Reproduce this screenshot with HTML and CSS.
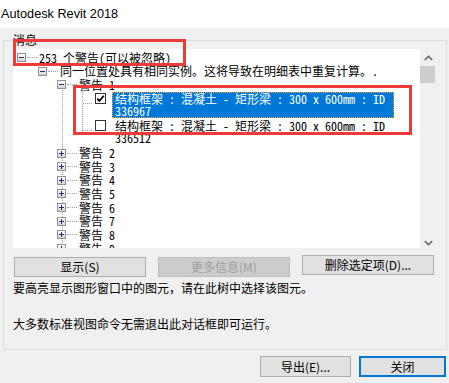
FILE: index.html
```html
<!DOCTYPE html>
<html lang="zh-CN">
<head>
<meta charset="utf-8">
<title>Autodesk Revit 2018</title>
<link rel="stylesheet" href="styles.css">
</head>
<body>
<div class="window">
  <header class="titlebar">Autodesk Revit 2018</header>
  <main class="content">
    <section class="group">
      <div class="legend">消息</div>
      <div class="tree">
        <div class="tree-view">
          <div class="row lvl0"><span class="tog minus"></span><span class="dots"></span><span class="label">253 个警告(可以被忽略)</span></div>
          <div class="row lvl1"><span class="tog minus"></span><span class="dots"></span><span class="label">同一位置处具有相同实例。这将导致在明细表中重复计算。.</span></div>
          <div class="warnings">
            <div class="row lvl2"><span class="tog minus"></span><span class="dots"></span><span class="label">警告 1</span></div>
            <div class="items">
              <div class="item">
                <span class="dots"></span>
                <span class="check"><svg width="9" height="9" viewBox="0 0 9 9"><path d="M1.2 4.6 L3.4 6.9 L7.8 1.8" fill="none" stroke="#000" stroke-width="1.7"/></svg></span>
                <span class="ilabel selected">结构框架 : 混凝土 - 矩形梁 : 300 x 600mm : ID<br>336967</span>
              </div>
              <div class="item">
                <span class="dots"></span>
                <span class="check"></span>
                <span class="ilabel">结构框架 : 混凝土 - 矩形梁 : 300 x 600mm : ID<br>336512</span>
              </div>
            </div>
            <div class="row lvl2"><span class="tog plus"></span><span class="dots"></span><span class="label">警告 2</span></div>
            <div class="row lvl2"><span class="tog plus"></span><span class="dots"></span><span class="label">警告 3</span></div>
            <div class="row lvl2"><span class="tog plus"></span><span class="dots"></span><span class="label">警告 4</span></div>
            <div class="row lvl2"><span class="tog plus"></span><span class="dots"></span><span class="label">警告 5</span></div>
            <div class="row lvl2"><span class="tog plus"></span><span class="dots"></span><span class="label">警告 6</span></div>
            <div class="row lvl2"><span class="tog plus"></span><span class="dots"></span><span class="label">警告 7</span></div>
            <div class="row lvl2"><span class="tog plus"></span><span class="dots"></span><span class="label">警告 8</span></div>
            <div class="row lvl2"><span class="tog plus"></span><span class="dots"></span><span class="label">警告 9</span></div>
          </div>
        </div>
        <div class="scrollbar">
          <span class="sb-arrow up"><svg width="9" height="6" viewBox="0 0 9 6"><path d="M0.8 5 L4.5 1.3 L8.2 5" fill="none" stroke="#606060" stroke-width="1.6"/></svg></span>
          <span class="thumb"></span>
          <span class="sb-space"></span>
          <span class="sb-arrow down"><svg width="9" height="6" viewBox="0 0 9 6"><path d="M0.8 1 L4.5 4.7 L8.2 1" fill="none" stroke="#606060" stroke-width="1.6"/></svg></span>
        </div>
      </div>
      <div class="actions">
        <button class="btn">显示(S)</button>
        <button class="btn" disabled>更多信息(M)</button>
        <button class="btn raised">删除选定项(D)...</button>
      </div>
      <p class="hint first">要高亮显示图形窗口中的图元，请在此树中选择该图元。</p>
      <p class="hint second">大多数标准视图命令无需退出此对话框即可运行。</p>
    </section>
    <footer class="footer">
      <button class="btn export">导出(E)...</button>
      <button class="btn close">关闭</button>
    </footer>
  </main>
  <div class="mark mark-a"></div>
  <div class="mark mark-b"></div>
</div>
</body>
</html>
```

FILE: styles.css
```css
* { box-sizing: border-box; }
html, body { margin: 0; padding: 0; }
body {
  background: #f0f0f0;
  width: 449px;
  height: 383px;
  overflow: hidden;
  font-family: "Noto Sans CJK SC", sans-serif;
  font-size: 12px;
  color: #000;
}
.window { position: relative; width: 449px; height: 383px; }
.titlebar {
  height: 28px;
  line-height: 28px;
  background: #fff;
  padding-left: 1px;
  font-family: "Liberation Sans", Arial, sans-serif;
  font-size: 12.7px;
  color: #000;
}
.content { padding-top: 12px; }
.group {
  margin: 0 2px 0 3px;
  height: 310px;
  border: 1px solid #dcdcdc;
  padding: 0 9px;
}
.legend {
  display: block;
  width: max-content;
  margin: -8px 0 0 -1px;
  padding: 0 1px;
  height: 13px;
  line-height: 13px;
  background: #f0f0f0;
}
.tree {
  display: flex;
  height: 199px;
  margin-top: 3px;
}
.tree-view {
  flex: 1;
  background: #fff;
  overflow: hidden;
  padding-top: 1.7px;
  font-family: "Noto Sans Mono CJK SC", "Noto Sans CJK SC", monospace;
  font-size: 12px;
  line-height: 13.65px;
}
.row {
  display: flex;
  align-items: center;
  height: 13.65px;
  white-space: nowrap;
}
.lvl0 { padding-left: 4px; }
.lvl1 { padding-left: 25px; }
.lvl2 { padding-left: 44px; }
.tog {
  position: relative;
  flex: none;
  width: 9px;
  height: 9px;
  border: 1px solid #919191;
  background: linear-gradient(#ffffff, #d4d4d4);
}
.tog::before {
  content: "";
  position: absolute;
  left: 1px;
  top: 3px;
  width: 5px;
  height: 1px;
  background: #1f2f7a;
}
.tog.plus::after {
  content: "";
  position: absolute;
  left: 3px;
  top: 1px;
  width: 1px;
  height: 5px;
  background: #1f2f7a;
}
.dots {
  flex: none;
  width: 10px;
  height: 0;
  margin: 0 2px 0 1px;
  border-bottom: 1px dotted #a0a0a0;
}
.label { line-height: 13.65px; }
.warnings {
  background-image: repeating-linear-gradient(to bottom, #a0a0a0 0 1px, transparent 1px 2px);
  background-repeat: no-repeat;
  background-size: 1px 100%;
  background-position: 49px 12px;
}
.items {
  background-image: repeating-linear-gradient(to bottom, #a0a0a0 0 1px, transparent 1px 2px);
  background-repeat: no-repeat;
  background-size: 1px 40px;
  background-position: 69px 0;
}
.item {
  display: flex;
  align-items: flex-start;
  height: 27.3px;
  padding-left: 70px;
  white-space: nowrap;
}
.item .dots { width: 9px; margin: 11px 3px 0 0; }
.check {
  flex: none;
  display: flex;
  align-items: center;
  justify-content: center;
  width: 11px;
  height: 11px;
  margin-top: 1px;
  margin-right: 6px;
  border: 1px solid #333;
  background: #fff;
}
.ilabel {
  line-height: 12px;
  padding: 0 8px 0 2px;
  border: 1px dotted transparent;
}
.ilabel.selected {
  background: #0078d7;
  color: #fff;
  border-color: #f0a040;
}
.scrollbar {
  flex: none;
  width: 17px;
  display: flex;
  flex-direction: column;
  background: #f0f0f0;
}
.sb-arrow {
  height: 17px;
  display: flex;
  justify-content: center;
}
.sb-arrow.up { align-items: center; padding-top: 1px; }
.sb-arrow.down { align-items: flex-end; padding-bottom: 2px; }
.thumb {
  height: 17px;
  width: 15px;
  background: #cdcdcd;
}
.sb-space { flex: 1; }
.actions {
  display: flex;
  align-items: flex-start;
  gap: 12px;
  margin-top: 9px;
  padding-left: 1px;
}
.btn {
  width: 132px;
  height: 20px;
  padding: 0;
  border: 1px solid #adadad;
  background: #e1e1e1;
  font-family: "Noto Sans CJK SC", sans-serif;
  font-size: 12px;
  line-height: 16px;
  color: #000;
}
.btn:disabled {
  background: #cccccc;
  border-color: #bfbfbf;
  color: #a0a0a0;
}
.btn.raised { margin-top: -2px; }
.hint {
  margin: 0;
  line-height: 14px;
  white-space: nowrap;
}
.hint.first { margin-top: 4px; }
.hint.second { margin-top: 21.5px; }
.footer {
  display: flex;
  justify-content: flex-end;
  gap: 8px;
  margin-top: 6px;
  padding-right: 3px;
}
.btn.export { width: 91px; height: 21px; }
.btn.close { width: 87px; height: 21px; border: 2px solid #0078d7; }
.mark {
  position: absolute;
  border: 3px solid #ef3a3a;
  pointer-events: none;
}
.mark-a { left: 13px; top: 39px; width: 173px; height: 27px; }
.mark-b { left: 73px; top: 85px; width: 339px; height: 50px; }
```
